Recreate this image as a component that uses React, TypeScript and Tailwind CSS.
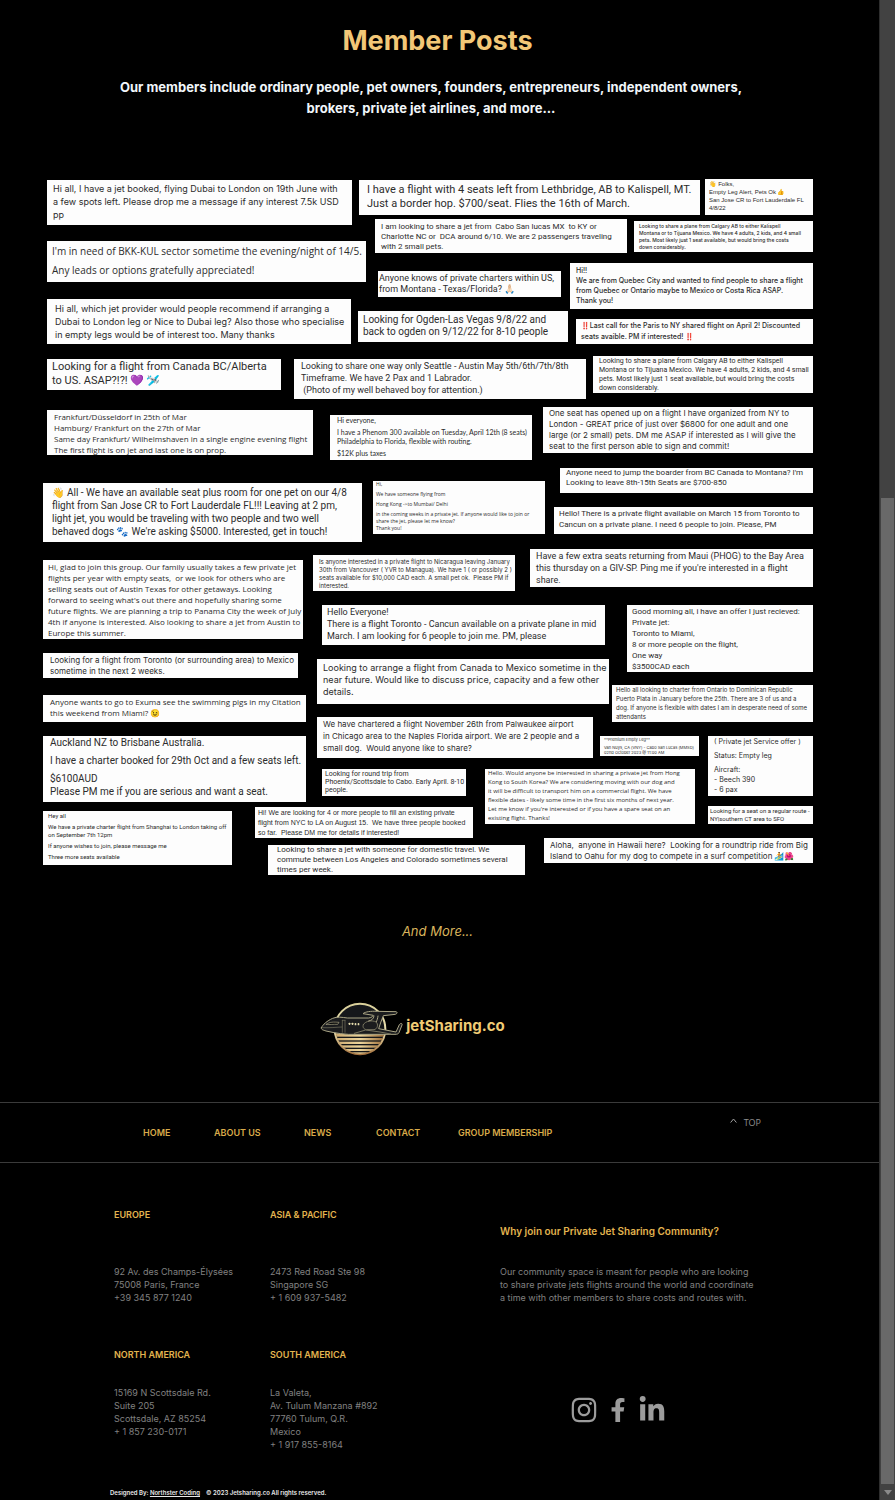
import React from "react";
import { FaFacebookF, FaInstagram, FaLinkedinIn } from "react-icons/fa";

const inter = "font-['Inter','Noto_Color_Emoji',sans-serif]";
const roboto = "font-['Roboto','Noto_Color_Emoji',sans-serif]";
const openSans = "font-['Open_Sans','Noto_Color_Emoji',sans-serif]";
const lato = "font-['Lato','Noto_Color_Emoji',sans-serif]";
const arial = "font-['Liberation_Sans','Noto_Color_Emoji',sans-serif]";

type Post = { className: string; font: string; text: string[] };

/* Each entry of `text` is a paragraph; line breaks inside it are kept. */
const leftPosts: Post[] = [
  {
    font: inter,
    className: "mt-px ml-1 w-[305px] min-h-[45px] pt-[2px] pl-[6px] text-[9px] leading-[13px]",
    text: ["Hi all, I have a jet booked, flying Dubai to London on 19th June with\na few spots left. Please drop me a message if any interest 7.5k USD\npp"],
  },
  {
    font: openSans,
    className: "mt-4 ml-1 w-[319px] min-h-[41px] pt-[3px] pl-[5px] text-[10px] leading-[14px] gap-[5px]",
    text: ["I'm in need of BKK-KUL sector sometime the evening/night of 14/5.", "Any leads or options gratefully appreciated!"],
  },
  {
    font: inter,
    className: "mt-[17px] ml-1 w-[304px] min-h-[45px] pt-[3px] pl-2 text-[9px] leading-[13px]",
    text: ["Hi all, which jet provider would people recommend if arranging a\nDubai to London leg or Nice to Dubai leg? Also those who specialise\nin empty legs would be of interest too. Many thanks"],
  },
  {
    font: roboto,
    className: "mt-[15px] ml-1 w-[234px] min-h-[31px] pt-px pl-[5px] text-[11px] leading-[14px]",
    text: ["Looking for a flight from Canada BC/Alberta\nto US. ASAP?!?! 💜 🛩️"],
  },
  {
    font: openSans,
    className: "mt-5 ml-1 w-[266px] min-h-[45px] pt-px pl-[7px] text-[8px] leading-[11px]",
    text: ["Frankfurt/Düsseldorf in 25th of Mar\nHamburg/ Frankfurt on the 27th of Mar\nSame day Frankfurt/ Wilhelmshaven in a single engine evening flight\nThe first flight is on jet and last one is on prop."],
  },
  {
    font: roboto,
    className: "mt-7 w-[319px] min-h-[59px] pt-[3px] pl-[9px] text-[10px] leading-[13px]",
    text: ["👋 All - We have an available seat plus room for one pet on our 4/8\nflight from San Jose CR to Fort Lauderdale FL!!! Leaving at 2 pm,\nlight jet, you would be traveling with two people and two well\nbehaved dogs 🐾 We're asking $5000. Interested, get in touch!"],
  },
  {
    font: openSans,
    className: "mt-[18px] w-[260px] min-h-[79px] pt-px pl-[5px] text-[8px] leading-[11px]",
    text: ["Hi, glad to join this group. Our family usually takes a few private jet\nflights per year with empty seats,  or we look for others who are\nselling seats out of Austin Texas for other getaways. Looking\nforward to seeing what's out there and hopefully sharing some\nfuture flights. We are planning a trip to Panama City the week of July\n4th if anyone is interested. Also looking to share a jet from Austin to\nEurope this summer."],
  },
  {
    font: inter,
    className: "mt-[14px] w-[255px] min-h-[25px] pt-[2px] pl-[7px] text-[8px] leading-[11px]",
    text: ["Looking for a flight from Toronto (or surrounding area) to Mexico\nsometime in the next 2 weeks."],
  },
  {
    font: openSans,
    className: "mt-[17px] w-[263px] min-h-[27px] pt-px pl-[7px] text-[8px] leading-[11px]",
    text: ["Anyone wants to go to Exuma see the swimming pigs in my Citation\nthis weekend from Miami? 😉"],
  },
  {
    font: roboto,
    className: "mt-[14px] w-[263px] min-h-[66px] pl-[7px] text-[10px] leading-[13px] gap-[5px]",
    text: ["Auckland NZ to Brisbane Australia.", "I have a charter booked for 29th Oct and a few seats left.", "$6100AUD\nPlease PM me if you are serious and want a seat."],
  },
  {
    font: roboto,
    className: "mt-[9px] w-[189px] min-h-[54px] pt-px pl-[5px] text-[6px] leading-[8px] gap-[3px]",
    text: ["Hey all", "We have a private charter flight from Shanghai to London taking off\non September 7th 12pm", "If anyone wishes to join, please message me", "Three more seats available"],
  },
];

const middlePosts: Post[] = [
  {
    font: roboto,
    className: "mt-px ml-[104px] w-[341px] min-h-[35px] pt-[3px] pl-2 text-[11px] leading-[14px]",
    text: ["I have a flight with 4 seats left from Lethbridge, AB to Kalispell, MT.\nJust a border hop. $700/seat. Flies the 16th of March."],
  },
  {
    font: roboto,
    className: "mt-1 ml-[120px] w-[252px] min-h-[34px] pt-[3px] pl-[6px] text-[8px] leading-[10px]",
    text: ["I am looking to share a jet from  Cabo San lucas MX  to KY or\nCharlotte NC or  DCA around 6/10. We are 2 passengers traveling\nwith 2 small pets."],
  },
  {
    font: roboto,
    className: "mt-[18px] ml-[123px] w-[183px] min-h-[26px] pt-[2px] pl-px text-[9px] leading-[11px]",
    text: ["Anyone knows of private charters within US,\nfrom Montana - Texas/Florida? 🙏🏻"],
  },
  {
    font: roboto,
    className: "mt-[14px] ml-[103px] w-[210px] min-h-[31px] pt-[3px] pl-[5px] text-[10px] leading-[12px]",
    text: ["Looking for Ogden-Las Vegas 9/8/22 and\nback to ogden on 9/12/22 for 8-10 people"],
  },
  {
    font: roboto,
    className: "mt-[17px] ml-[39px] w-[292px] min-h-[40px] pt-px pl-[7px] text-[9px] leading-[12px]",
    text: ["Looking to share one way only Seattle - Austin May 5th/6th/7th/8th\nTimeframe. We have 2 Pax and 1 Labrador.\n (Photo of my well behaved boy for attention.)"],
  },
  {
    font: lato,
    className: "mt-4 ml-[75px] w-[202px] min-h-[45px] pt-px pl-[7px] text-[7px] leading-[9px] gap-[3px]",
    text: ["Hi everyone,", "I have a Phenom 300 available on Tuesday, April 12th (8 seats)\nPhiladelphia to Florida, flexible with routing.", "$12K plus taxes"],
  },
  {
    font: openSans,
    className: "mt-[21px] ml-[118px] w-[172px] min-h-[53px] pl-[3px] text-[5px] leading-[7px] gap-[3px] font-medium",
    text: ["Hi,", "We have someone flying from", "Hong Kong ->to Mumbai/ Delhi", "in the coming weeks in a private jet. If anyone would like to join or\nshare the jet, please let me know?\nThank you!"],
  },
  {
    font: inter,
    className: "mt-[21px] ml-[58px] w-[202px] min-h-[36px] pt-[3px] pl-[6px] text-[6px] leading-[8px]",
    text: ["Is anyone interested in a private flight to Nicaragua leaving January\n30th from Vancouver ( YVR to Managua). We have 1 ( or possibly 2 )\nseats available for $10,000 CAD each. A small pet ok.  Please PM if\ninterested."],
  },
  {
    font: roboto,
    className: "mt-[14px] ml-[67px] w-[283px] min-h-[40px] pt-px pl-[5px] text-[9px] leading-[12px]",
    text: ["Hello Everyone!\nThere is a flight Toronto - Cancun available on a private plane in mid\nMarch. I am looking for 6 people to join me. PM, please"],
  },
  {
    font: inter,
    className: "mt-[14px] ml-[62px] w-[292px] min-h-[45px] pt-[3px] pl-[6px] text-[9px] leading-[12px]",
    text: ["Looking to arrange a flight from Canada to Mexico sometime in the\nnear future. Would like to discuss price, capacity and a few other\ndetails."],
  },
  {
    font: inter,
    className: "mt-[13px] ml-[62px] w-[276px] min-h-[41px] pt-px pl-[6px] text-[8px] leading-[12px]",
    text: ["We have chartered a flight November 26th from Palwaukee airport\nin Chicago area to the Naples Florida airport. We are 2 people and a\nsmall dog.  Would anyone like to share?"],
  },
  {
    font: roboto,
    className: "mt-[11px] ml-[67px] w-[144px] min-h-[27px] pt-px pl-[3px] text-[7px] leading-[8px]",
    text: ["Looking for round trip from\nPhoenix/Scottsdale to Cabo. Early April. 8-10\npeople."],
  },
  {
    font: arial,
    className: "mt-[11px] w-[218px] min-h-[31px] pt-px pl-[3px] text-[7px] leading-[10px]",
    text: ["Hi! We are looking for 4 or more people to fill an existing private\nflight from NYC to LA on August 15.  We have three people booked\nso far.  Please DM me for details if interested!"],
  },
  {
    font: roboto,
    className: "mt-[7px] ml-[13px] w-[257px] min-h-[30px] pl-[9px] text-[8px] leading-[10px]",
    text: ["Looking to share a jet with someone for domestic travel. We\ncommute between Los Angeles and Colorado sometimes several\ntimes per week."],
  },
];

const rightPosts: Post[] = [
  {
    font: arial,
    className: "w-[108px] min-h-[36px] pt-px pl-[4px] text-[6px] leading-[8px]",
    text: ["👋 Folks,\nEmpty Leg Alert, Pets Ok 👍\nSan Jose CR to Fort Lauderdale FL\n4/8/22"],
  },
  {
    font: inter,
    className: "mt-[6px] w-[179px] min-h-[31px] pt-[2px] pl-[5px] text-[5px] leading-[7px] font-medium",
    text: ["Looking to share a plane from Calgary AB to either Kalispell\nMontana or to Tijuana Mexico. We have 4 adults, 2 kids, and 4 small\npets. Most likely just 1 seat available, but would bring the costs\ndown considerably."],
  },
  {
    font: inter,
    className: "mt-[11px] w-[243px] min-h-[46px] pt-[3px] pl-[6px] text-[7px] leading-[10px] font-medium",
    text: ["Hi!!\nWe are from Quebec City and wanted to find people to share a flight\nfrom Quebec or Ontario maybe to Mexico or Costa Rica ASAP.\nThank you!"],
  },
  {
    font: inter,
    className: "mt-[10px] w-[237px] min-h-[25px] pt-px pl-[5px] text-[7px] leading-[11px] font-medium",
    text: ["‼️Last call for the Paris to NY shared flight on April 2! Discounted\nseats avaible. PM if interested! ‼️"],
  },
  {
    font: roboto,
    className: "mt-3 w-[220px] min-h-[37px] pt-px pl-[6px] text-[7px] leading-[9px]",
    text: ["Looking to share a plane from Calgary AB to either Kalispell\nMontana or to Tijuana Mexico. We have 4 adults, 2 kids, and 4 small\npets. Most likely just 1 seat available, but would bring the costs\ndown considerably."],
  },
  {
    font: inter,
    className: "mt-[14px] w-[270px] min-h-[46px] pt-px pl-[6px] text-[8px] leading-[11px]",
    text: ["One seat has opened up on a flight I have organized from NY to\nLondon - GREAT price of just over $6800 for one adult and one\nlarge (or 2 small) pets. DM me ASAP if interested as I will give the\nseat to the first person able to sign and commit!"],
  },
  {
    font: roboto,
    className: "mt-[15px] w-[253px] min-h-[25px] pl-[6px] text-[8px] leading-[10px]",
    text: ["Anyone need to jump the boarder from BC Canada to Montana? I'm\nLooking to leave 8th-15th Seats are $700-850"],
  },
  {
    font: roboto,
    className: "mt-[14px] w-[259px] min-h-[27px] pt-px pl-[5px] text-[8px] leading-[11px]",
    text: ["Hello! There is a private flight available on March 15 from Toronto to\nCancun on a private plane. I need 6 people to join. Please, PM"],
  },
  {
    font: roboto,
    className: "mt-[15px] w-[283px] min-h-[38px] pt-px pl-[6px] text-[9px] leading-[12px]",
    text: ["Have a few extra seats returning from Maui (PHOG) to the Bay Area\nthis thursday on a GIV-SP. Ping me if you're interested in a flight\nshare."],
  },
  {
    font: roboto,
    className: "mt-[18px] w-[186px] min-h-[67px] pt-px pl-[5px] text-[8px] leading-[11px]",
    text: ["Good morning all, i have an offer I just recieved:\nPrivate jet:\nToronto to Miami,\n8 or more people on the flight,\nOne way\n$3500CAD each"],
  },
  {
    font: inter,
    className: "mt-[13px] w-[201px] min-h-[37px] pl-[4px] text-[6px] leading-[9px]",
    text: ["Hello all looking to charter from Ontario to Dominican Republic\nPuerto Plata in January before the 25th. There are 3 of us and a\ndog. If anyone is flexible with dates I am in desperate need of some\nattendants"],
  },
];

const emptyLegPost: Post = {
  font: inter,
  className: "-mr-1 w-[99px] min-h-[20px] pt-px pl-[4px] text-[4px] leading-[5px] gap-[3px]",
  text: ["**Premium Empty Leg**", "Van Nuys, CA (VNY) - Cabo San Lucas (MMSD)\n02nd October 2023 @ 11:00 AM"],
};
const hongKongPost: Post = {
  font: openSans,
  className: "mt-[13px] w-[210px] min-h-[55px] pl-[3px] text-[6px] leading-[9px] font-medium",
  text: ["Hello. Would anyone be interested in sharing a private jet from Hong\nKong to South Korea? We are considering moving with our dog and\nit will be difficult to transport him on a commercial flight. We have\nflexible dates - likely some time in the first six months of next year.\nLet me know if you're interested or if you have a spare seat on an\nexisting flight. Thanks!"],
};
const servicePost: Post = {
  font: inter,
  className: "w-[105px] min-h-[60px] pt-px pl-[6px] text-[7px] leading-[10px] gap-1",
  text: ["( Private jet Service offer )", "Status: Empty leg", "Aircraft:\n- Beech 390\n- 6 pax"],
};
const routePost: Post = {
  font: roboto,
  className: "mt-[10px] w-[105px] min-h-[18px] pt-px pl-[2px] text-[6px] leading-[8px]",
  text: ["Looking for a seat on a regular route -\nNY|southern CT area to SFO"],
};
const alohaPost: Post = {
  font: inter,
  className: "mt-[14px] w-[269px] min-h-[25px] pt-[2px] pl-[6px] text-[8px] leading-[11px]",
  text: ["Aloha,  anyone in Hawaii here?  Looking for a roundtrip ride from Big\nIsland to Oahu for my dog to compete in a surf competition 🏄🌺"],
};

function PostCard({ post }: { post: Post }) {
  return (
    <article className={`flex shrink-0 flex-col bg-[#fdfdfd] whitespace-pre text-[#2c2c2c] ${post.font} ${post.className}`}>
      {post.text.map((paragraph) => (
        <p key={paragraph}>{paragraph}</p>
      ))}
    </article>
  );
}

function JetLogo() {
  return (
    <svg viewBox="60 36 252 165" className="h-[55px] w-[84px]" role="img" aria-label="Private jet">
      <defs>
        <linearGradient id="ring" x1="0" y1="0" x2="0" y2="1">
          <stop offset="0" stopColor="#d9cf9a" />
          <stop offset="0.55" stopColor="#e9dfae" />
          <stop offset="1" stopColor="#a5723f" />
        </linearGradient>
        <linearGradient id="sea" x1="0" y1="0" x2="1" y2="0">
          <stop offset="0" stopColor="#c9a56b" />
          <stop offset="0.5" stopColor="#ecd49a" />
          <stop offset="1" stopColor="#94622f" />
        </linearGradient>
        <clipPath id="disc">
          <circle cx="180" cy="117" r="74" />
        </clipPath>
      </defs>
      <circle cx="180" cy="117" r="76" fill="#15171a" stroke="url(#ring)" strokeWidth="6" />
      <g clipPath="url(#disc)" fill="url(#sea)">
        <rect x="100" y="130" width="160" height="10" />
        <rect x="100" y="144" width="160" height="7" />
        <rect x="100" y="155" width="160" height="7" />
        <rect x="100" y="166" width="160" height="7" />
        <rect x="100" y="177" width="160" height="6" />
        <rect x="100" y="187" width="160" height="8" />
      </g>
      <g fill="#1b1c1e" stroke="#aaa585" strokeWidth="3" strokeLinejoin="round" strokeLinecap="round">
        <path d="M64 113C68 104 82 92 98 85C112 79 126 82 142 84H198C210 85 217 82 220 76L189 71C196 65 212 63 232 64L288 65C293 66 292 71 286 73L250 77C245 90 240 102 236 116L288 126L298 104C301 99 308 99 306 105L297 128C295 132 291 133 285 133H168C140 135 104 129 78 123C68 120 62 118 64 113Z" />
        <path d="M190 104C196 92 218 90 228 96C236 102 233 117 222 119H199C190 117 187 110 190 104Z" stroke="#77745f" />
        <path d="M163 130L197 120L240 126L272 132" fill="none" stroke="#77745f" />
        <path d="M222 78C220 88 215 91 206 93M234 78C233 86 231 91 229 95" fill="none" />
        <path d="M79 103C90 95 100 96 117 97L113 103C101 102 90 105 79 103Z" fill="#090a0b" strokeWidth="2" />
        <path d="M127 91V127M135 91V127M127 91H135M66 113C88 114 105 112 126 111" fill="none" strokeWidth="2" stroke="#77745f" />
      </g>
      <g fill="#e5dcae">
        <rect x="146" y="98" width="5" height="7" rx="2" />
        <rect x="155" y="98" width="5" height="7" rx="2" />
        <rect x="164" y="99" width="5" height="7" rx="2" />
        <rect x="173" y="99" width="5" height="7" rx="2" />
      </g>
    </svg>
  );
}

const navLinks = [
  { label: "HOME", className: "w-[71px]" },
  { label: "ABOUT US", className: "w-[90px]" },
  { label: "NEWS", className: "w-[72px]" },
  { label: "CONTACT", className: "w-[82px]" },
  { label: "GROUP MEMBERSHIP", className: "" },
];

const offices = [
  { region: "EUROPE", gap: "mt-[44px]", lines: ["92 Av. des Champs-Élysées", "75008 Paris, France", "+39 345 877 1240"] },
  { region: "ASIA & PACIFIC", gap: "mt-[44px]", lines: ["2473 Red Road Ste 98", "Singapore SG", "+ 1 609 937-5482"] },
  { region: "NORTH AMERICA", gap: "mt-[25px]", lines: ["15169 N Scottsdale Rd.", "Suite 205", "Scottsdale, AZ 85254", "+ 1 857 230-0171"] },
  { region: "SOUTH AMERICA", gap: "mt-[25px]", lines: ["La Valeta,", "Av. Tulum Manzana #892", "77760 Tulum, Q.R.", "Mexico", "+ 1 917 855-8164"] },
];

export default function App() {
  return (
    <div className="flex min-h-screen bg-black font-['Inter',sans-serif]">
      <div className="min-w-0 flex-1">
        <main>
          <header className="pt-[25px] pr-5 pl-4 text-center">
            <h1 className="text-[27px] leading-8 font-bold text-[#f2c777]">Member Posts</h1>
            <p className="mx-auto mt-5 max-w-[660px] pr-[13px] text-[13px] leading-[21px] font-bold text-[#f1f6fa]">
              Our members include ordinary people, pet owners, founders, entrepreneurs, independent owners,
              brokers, private jet airlines, and more...
            </p>
          </header>

          <section aria-label="Member posts" className="mt-[60px] mr-[66px] ml-[43px] grid">
            <div className="col-start-1 row-start-1 flex flex-col items-start">
              {leftPosts.map((post) => (
                <PostCard key={post.text[0]} post={post} />
              ))}
            </div>
            <div className="col-start-1 row-start-1 flex flex-col items-start pl-[212px]">
              {middlePosts.map((post) => (
                <PostCard key={post.text[0]} post={post} />
              ))}
            </div>
            <div className="col-start-1 row-start-1 flex flex-col items-end">
              {rightPosts.map((post) => (
                <PostCard key={post.className} post={post} />
              ))}
              <div className="mt-[14px] flex gap-[13px]">
                <div className="flex flex-col items-end">
                  <PostCard post={emptyLegPost} />
                  <PostCard post={hongKongPost} />
                </div>
                <div className="flex flex-col">
                  <PostCard post={servicePost} />
                  <PostCard post={routePost} />
                </div>
              </div>
              <PostCard post={alohaPost} />
            </div>
          </section>

          <p className="mt-[46px] pr-1 text-center text-[13px] leading-5 text-[#d9b45c] italic">And More...</p>

          <div className="mt-[61px] flex items-center justify-center gap-[2px] pr-[54px]">
            <JetLogo />
            <span className="pb-2 text-[15px] leading-5 font-bold text-[#f0cc75]">jetSharing.co</span>
          </div>
        </main>

        <nav aria-label="Footer" className="mt-[45px] flex h-[61px] items-center border-y border-[#3a3a3a] pl-[143px]">
          <ul className="flex flex-1 text-[9px] leading-3 font-semibold text-[#d9ab4a]">
            {navLinks.map((link) => (
              <li key={link.label} className={link.className}>
                <a href="#">{link.label}</a>
              </li>
            ))}
          </ul>
          <a href="#top" className="mr-[118px] mb-5 flex items-center gap-[7px] font-['Open_Sans',sans-serif] text-[9px] leading-3 font-medium text-[#8f8f8f]">
            <svg viewBox="0 0 7 5" className="mb-1 h-[5px] w-[7px] fill-none stroke-[#a0a0a0]" aria-hidden="true">
              <path d="M0.6 4.5L3.5 1L6.4 4.5" />
            </svg>
            TOP
          </a>
        </nav>

        <footer>
          <div className="flex pt-[46px] pl-[114px]">
            <div className="grid w-[386px] shrink-0 grid-cols-[156px_1fr]">
              {offices.map((office) => (
                <section key={office.region} className="h-[139px] first:h-[140px]">
                  <h2 className="text-[9px] leading-3 font-semibold text-[#e3b44f]">{office.region}</h2>
                  <address className={`${office.gap} text-[9px] leading-[13px] text-[#818181] not-italic`}>
                    {office.lines.map((line) => (
                      <div key={line}>{line}</div>
                    ))}
                  </address>
                </section>
              ))}
            </div>
            <div className="pt-4">
              <h2 className="text-[10px] leading-3 font-semibold text-[#e3b44f]">Why join our Private Jet Sharing Community?</h2>
              <p className="mt-7 w-[270px] text-[9px] leading-[13px] text-[#818181]">
                Our community space is meant for people who are looking
                <br />
                to share private jets flights around the world and coordinate
                <br />
                a time with other members to share costs and routes with.
              </p>
              <div className="mt-[92px] flex gap-2 pl-[70px] text-[#9c9c9c]">
                <a href="#" aria-label="Instagram">
                  <FaInstagram className="size-7" />
                </a>
                <a href="#" aria-label="Facebook">
                  <FaFacebookF className="my-[2px] size-6" />
                </a>
                <a href="#" aria-label="LinkedIn">
                  <FaLinkedinIn className="size-7" />
                </a>
              </div>
            </div>
          </div>
          <p className="pl-[110px] text-[6px] leading-[9px] font-semibold text-[#e8e8e8]">
            Designed By:{" "}
            <a href="#" className="underline">
              Northster Coding
            </a>
            <span className="ml-[6px]">© 2023 Jetsharing.co All rights reserved.</span>
          </p>
        </footer>
      </div>

      <div aria-hidden="true" className="flex w-4 shrink-0 flex-col border-l border-[#2e2e2e] bg-[#424242]">
        <div className="basis-[498px]" />
        <div className="mx-px flex-1 bg-[#696969]" />
        <div className="flex h-4 items-center justify-center">
          <svg viewBox="0 0 8 5" className="h-[5px] w-2 fill-[#8a8a8a]">
            <path d="M0 0H8L4 5Z" />
          </svg>
        </div>
      </div>
    </div>
  );
}
